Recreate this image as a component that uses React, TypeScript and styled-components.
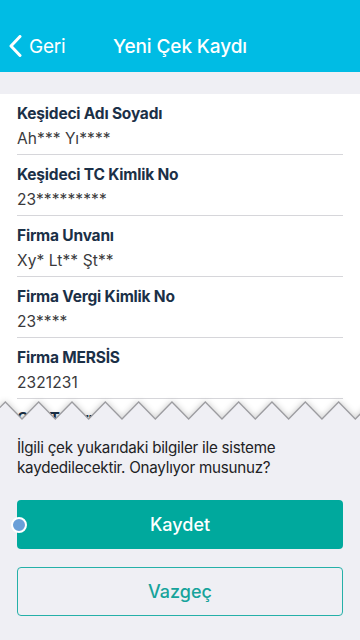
import React from "react";
import styled, { createGlobalStyle } from "styled-components";

const GlobalStyle = createGlobalStyle`
  html, body { margin: 0; padding: 0; background: #ffffff; }
  body { font-family: "Inter", "Roboto", "Noto Sans", sans-serif; -webkit-font-smoothing: antialiased; }
  * { box-sizing: border-box; }
`;

const Screen = styled.div`
  position: relative;
  width: 360px;
  height: 640px;
  overflow: hidden;
  background: #ffffff;
  display: flex;
  flex-direction: column;
`;

const Header = styled.header`
  height: 72px;
  flex-shrink: 0;
  background: #00bce4;
  padding-top: 20px;
  display: grid;
  grid-template-columns: 1fr auto 1fr;
  align-items: center;
  color: #ffffff;
`;

const BackButton = styled.button`
  justify-self: start;
  display: flex;
  align-items: center;
  gap: 7px;
  margin-left: 9px;
  padding: 0;
  border: 0;
  background: none;
  color: #ffffff;
  font-family: inherit;
  font-size: 19px;
  font-weight: 400;
  letter-spacing: -0.2px;
  cursor: pointer;
`;

const Title = styled.h1`
  margin: 0;
  font-size: 19px;
  font-weight: 500;
  letter-spacing: -0.1px;
  color: #ffffff;
`;

const Band = styled.div`
  height: 22px;
  flex-shrink: 0;
  background: #efeff4;
`;

const List = styled.ul`
  list-style: none;
  margin: 0;
  padding: 0 17px;
`;

const Item = styled.li`
  height: 61px;
  padding-top: 10px;
  border-bottom: 1px solid #d6d6da;
  display: flex;
  flex-direction: column;
  gap: 4px;
`;

const Label = styled.span`
  font-size: 15.5px;
  line-height: 20px;
  font-weight: 700;
  color: #1b3047;
  letter-spacing: -0.2px;
`;

const Value = styled.span`
  font-size: 15.5px;
  line-height: 22px;
  font-weight: 400;
  color: #3a3a3c;
  letter-spacing: 0.1px;
`;

const Sheet = styled.section`
  position: absolute;
  left: 0;
  right: 0;
  bottom: 0;
  height: 242px;
  display: flex;
  flex-direction: column;
`;

const Edge = styled.svg`
  display: block;
  width: 360px;
  height: 24px;
  overflow: visible;
  flex-shrink: 0;
`;

const SheetBody = styled.div`
  flex: 1;
  background: #efeff4;
  padding: 16px 17px 0;
  display: flex;
  flex-direction: column;
`;

const Message = styled.p`
  margin: 0;
  font-size: 15.2px;
  line-height: 20px;
  color: #222224;
  letter-spacing: -0.25px;
`;

const ActionButton = styled.button<{ $primary?: boolean }>`
  position: relative;
  height: 49px;
  width: 100%;
  border-radius: 4px;
  font-family: inherit;
  font-size: 18px;
  font-weight: 500;
  cursor: pointer;
  margin-top: ${(p) => (p.$primary ? "22px" : "18px")};
  background: ${(p) => (p.$primary ? "#00a99d" : "transparent")};
  color: ${(p) => (p.$primary ? "#ffffff" : "#16a39b")};
  border: ${(p) => (p.$primary ? "none" : "1px solid #25b0a8")};
`;

const FocusDot = styled.span`
  position: absolute;
  left: -6px;
  top: 50%;
  width: 16px;
  height: 16px;
  margin-top: -8px;
  border-radius: 50%;
  background: #6a9fd8;
  border: 2px solid #ffffff;
`;

const fields = [
  { label: "Keşideci Adı Soyadı", value: "Ah*** Yı****" },
  { label: "Keşideci TC Kimlik No", value: "23*********" },
  { label: "Firma Unvanı", value: "Xy* Lt** Şt**" },
  { label: "Firma Vergi Kimlik No", value: "23****" },
  { label: "Firma MERSİS", value: "2321231" },
  { label: "Çek Tutarı", value: "" },
];

function zigzag(): string {
  const period = 33.33;
  const half = period / 2;
  const pts: string[] = [];
  let x = 22 - period * 1;
  let valley = true;
  while (x <= 360 + period) {
    pts.push(`${x.toFixed(2)},${valley ? 21 : 4}`);
    x += half;
    valley = !valley;
  }
  return pts.join(" ");
}

export default function App() {
  const line = zigzag();
  return (
    <>
      <GlobalStyle />
      <Screen>
        <Header>
          <BackButton>
            <svg width="13" height="22" viewBox="0 0 13 22" aria-hidden="true">
              <path d="M11 1.5 L2 11 L11 20.5" fill="none" stroke="#ffffff" strokeWidth="3" strokeLinecap="round" strokeLinejoin="round" />
            </svg>
            Geri
          </BackButton>
          <Title>Yeni Çek Kaydı</Title>
          <span />
        </Header>
        <Band />
        <List>
          {fields.map((f) => (
            <Item key={f.label}>
              <Label>{f.label}</Label>
              {f.value && <Value>{f.value}</Value>}
            </Item>
          ))}
        </List>
        <Sheet>
          <Edge viewBox="0 0 360 24" aria-hidden="true">
            <defs>
              <filter id="edgeShadow" x="-10%" y="-100%" width="120%" height="300%">
                <feDropShadow dx="0" dy="-1" stdDeviation="3" floodColor="#000000" floodOpacity="0.22" />
              </filter>
            </defs>
            <polygon points={`${line} 380,24 -20,24`} fill="#efeff4" filter="url(#edgeShadow)" />
            <polyline points={line} fill="none" stroke="#9c9ca0" strokeWidth="1.3" />
          </Edge>
          <SheetBody>
            <Message>İlgili çek yukarıdaki bilgiler ile sisteme kaydedilecektir. Onaylıyor musunuz?</Message>
            <ActionButton $primary>
              <FocusDot />
              Kaydet
            </ActionButton>
            <ActionButton>Vazgeç</ActionButton>
          </SheetBody>
        </Sheet>
      </Screen>
    </>
  );
}
